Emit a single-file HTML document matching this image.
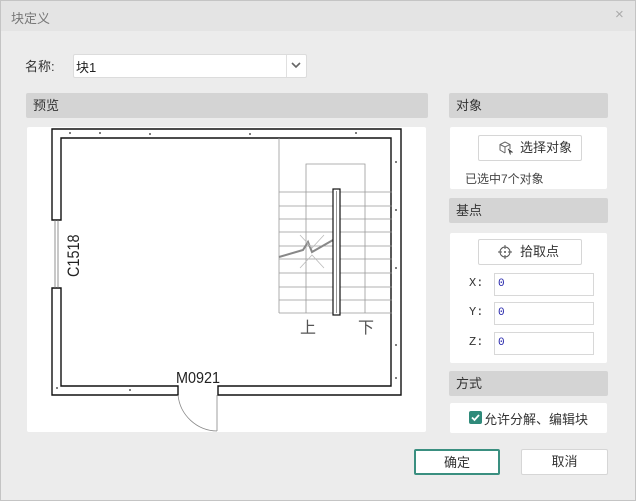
<!DOCTYPE html>
<html><head><meta charset="utf-8"><style>
*{margin:0;padding:0;box-sizing:border-box}
body{width:636px;height:501px;background:#ececec;font-family:"Liberation Sans","Noto Sans CJK SC",sans-serif;font-size:12px;color:#333;position:relative;overflow:hidden}
.a{position:absolute}
.hdr{background:#d4d4d4;border-radius:2px;height:25px;line-height:25px;padding-left:7px;font-size:13px;color:#333}
.box{background:#fff;border-radius:2px}
.btn{background:#fff;border:1px solid #d6d6d6;border-radius:2px;text-align:center;font-size:13px;color:#333}
.inp{background:#fff;border:1px solid #d8d8d8;height:23px;line-height:21px;padding-left:3px;font-size:11px;color:#22a;font-family:"Liberation Mono",monospace}
.lbl{font-size:12px;color:#333;font-family:"Liberation Mono","Noto Sans CJK SC",monospace}
</style></head><body>
<div class="a" style="left:0;top:0;width:636px;height:31px;background:#e4e4e4"></div>
<div class="a" style="left:11px;top:8px;font-size:13px;color:#777">块定义</div>
<div class="a" style="left:615px;top:6px;font-size:15px;color:#aaa">×</div>

<div class="a" style="left:25px;top:56px;font-size:13px;color:#333">名称:</div>
<div class="a" style="left:73px;top:54px;width:234px;height:24px;background:#fff;border:1px solid #dcdcdc;border-radius:2px"></div>
<div class="a" style="left:76px;top:57px;font-size:13px;color:#222">块1</div>
<div class="a" style="left:286px;top:55px;width:1px;height:22px;background:#e0e0e0"></div>
<svg class="a" style="left:290px;top:61px" width="12" height="9"><path d="M2 2 L6 6 L10 2" stroke="#666" stroke-width="1.6" fill="none"/></svg>

<div class="a hdr" style="left:26px;top:93px;width:402px">预览</div>
<div class="a box" style="left:27px;top:127px;width:399px;height:305px"></div>
<svg class="a" style="left:0;top:0" width="636" height="501">
<g fill="none" stroke="#111" stroke-width="1.4">
<path d="M52 129 H401 V395 H218 V386 H391 V138 H61 V220 H52 Z"/>
<path d="M52 288 H61 V386 H178 V395 H52 Z"/>
</g>
<g stroke="#777" stroke-width="0.8"><line x1="55" y1="220" x2="55" y2="288"/><line x1="58" y1="220" x2="58" y2="288"/></g>
<g stroke="#999" stroke-width="0.8" fill="none">
<line x1="279" y1="138" x2="279" y2="313"/>
<line x1="279" y1="313" x2="392" y2="313"/>
<path d="M306 313 V164 H365 V313"/>
<path d="M279 192H392M279 206H392M279 219H392M279 232H392M279 246H392M279 259H392M279 273H392M279 287H392M279 300H392"/>
<path d="M279 257 L303 250 L308 242 L312 252 L333 240" stroke="#888" stroke-width="2"/>
<path d="M300 235 L312 248 L324 235 M300 268 L312 255 L324 268" stroke="#bbb"/>
</g>
<rect x="333" y="189" width="7" height="126" fill="#fff" stroke="#111" stroke-width="1.2"/>
<line x1="336.5" y1="191" x2="336.5" y2="313" stroke="#999"/>
<path d="M217 395 V431 M178 395 A40 40 0 0 0 217 431" fill="none" stroke="#888" stroke-width="0.8"/>
<g fill="#555"><circle cx="70" cy="133" r="1"/><circle cx="100" cy="133" r="1"/><circle cx="150" cy="134" r="1"/><circle cx="250" cy="134" r="1"/><circle cx="356" cy="133" r="1"/><circle cx="396" cy="162" r="1"/><circle cx="396" cy="210" r="1"/><circle cx="396" cy="268" r="1"/><circle cx="396" cy="345" r="1"/><circle cx="396" cy="378" r="1"/><circle cx="57" cy="388" r="1"/><circle cx="130" cy="390" r="1"/></g>
<text x="0" y="0" transform="translate(79,277) rotate(-90) scale(0.85,1)" font-family="Liberation Sans,sans-serif" font-size="17" fill="#222">C1518</text>
<text x="0" y="0" transform="translate(176,383) scale(0.9,1)" font-family="Liberation Sans,sans-serif" font-size="16" fill="#222">M0921</text>
<text x="300" y="333" font-family="Noto Sans CJK SC,sans-serif" font-size="16" fill="#555">上</text>
<text x="358" y="333" font-family="Noto Sans CJK SC,sans-serif" font-size="16" fill="#555">下</text>
</svg>

<div class="a hdr" style="left:449px;top:93px;width:159px">对象</div>
<div class="a box" style="left:450px;top:127px;width:157px;height:62px"></div>
<div class="a btn" style="left:478px;top:135px;width:104px;height:26px;line-height:24px;text-align:left;padding-left:41px">选择对象</div>
<svg class="a" style="left:499px;top:141px" width="14" height="14"><path d="M6 1 L11 3.5 V8 M6 1 L1 3.5 V9 L6 12 M1 3.5 L6 6 L11 3.5 M6 6 V12" stroke="#666" fill="none"/><path d="M9 8 L13 11 L10.5 11 L11.5 13.5" stroke="#444" fill="#444"/></svg>
<div class="a" style="left:465px;top:170px;font-size:12px;color:#444">已选中7个对象</div>

<div class="a hdr" style="left:449px;top:198px;width:159px">基点</div>
<div class="a box" style="left:450px;top:233px;width:157px;height:130px"></div>
<div class="a btn" style="left:478px;top:239px;width:104px;height:26px;line-height:24px;text-align:left;padding-left:41px">拾取点</div>
<svg class="a" style="left:498px;top:245px" width="14" height="14"><circle cx="7" cy="7" r="5" stroke="#555" fill="none"/><path d="M7 0V4M7 10V14M0 7H4M10 7H14" stroke="#555"/><circle cx="7" cy="7" r="1" fill="#555"/></svg>
<div class="a lbl" style="left:469px;top:276px">X:</div>
<div class="a inp" style="left:494px;top:273px;width:100px">0</div>
<div class="a lbl" style="left:469px;top:305px">Y:</div>
<div class="a inp" style="left:494px;top:302px;width:100px">0</div>
<div class="a lbl" style="left:469px;top:335px">Z:</div>
<div class="a inp" style="left:494px;top:332px;width:100px">0</div>

<div class="a hdr" style="left:449px;top:371px;width:159px">方式</div>
<div class="a box" style="left:450px;top:403px;width:157px;height:30px"></div>
<div class="a" style="left:469px;top:411px;width:13px;height:13px;background:#2f8a7a;border-radius:2px"></div>
<svg class="a" style="left:469px;top:411px" width="13" height="13"><path d="M3 6.5 L5.5 9 L10 4" stroke="#fff" stroke-width="1.8" fill="none"/></svg>
<div class="a" style="left:484px;top:409px;font-size:13px;color:#333">允许分解、编辑块</div>

<div class="a btn" style="left:414px;top:449px;width:86px;height:26px;line-height:23px;border:2px solid #3a8f80">确定</div>
<div class="a btn" style="left:521px;top:449px;width:87px;height:26px;line-height:24px">取消</div>
<div class="a" style="left:0;top:0;width:636px;height:501px;border:1px solid #c4c4c4;pointer-events:none"></div>
</body></html>
